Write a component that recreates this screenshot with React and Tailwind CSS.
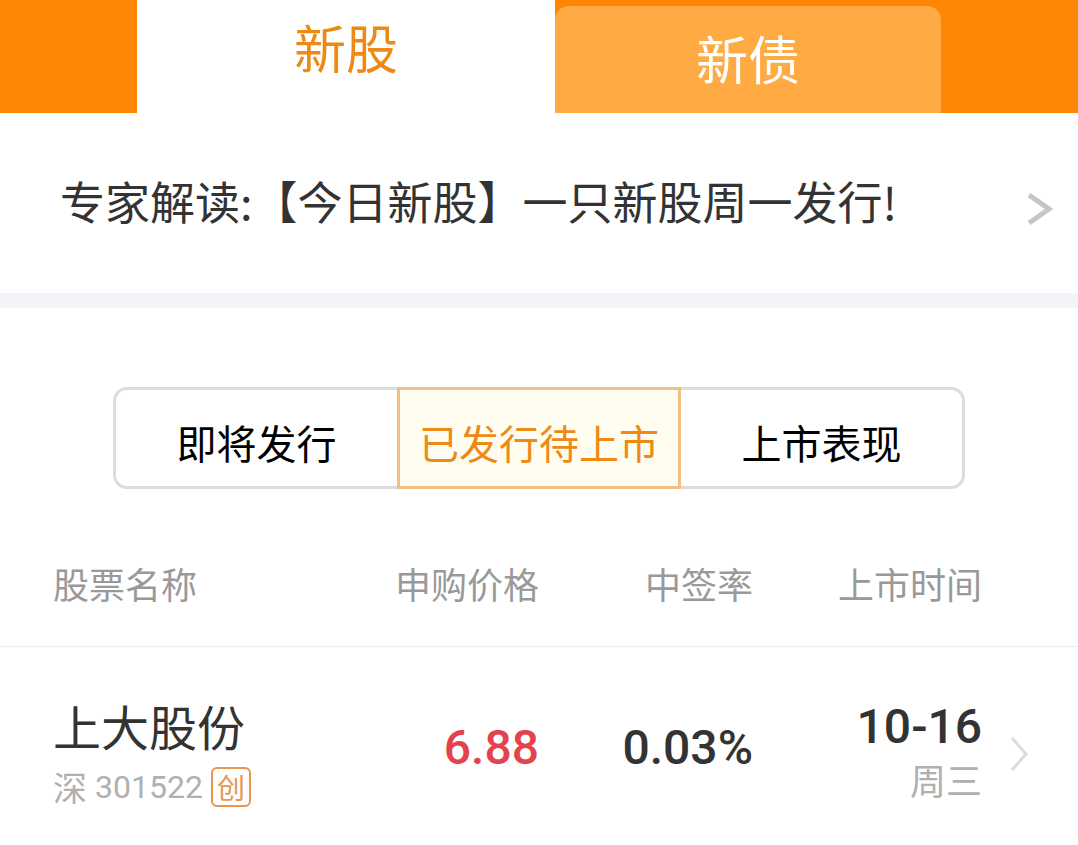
import React, { useState } from "react";

const filters = ["即将发行", "已发行待上市", "上市表现"];

const stocks = [
  {
    name: "上大股份",
    market: "深",
    code: "301522",
    board: "创",
    price: "6.88",
    rate: "0.03%",
    date: "10-16",
    weekday: "周三",
  },
];

function Header() {
  return (
    <nav aria-label="新股新债" className="flex h-[113px] items-end bg-[#ff8604] px-[137px] text-[52px] leading-[60px]">
      <button type="button" aria-current="page" className="h-full flex-[418] bg-white pb-5 text-[#ee8a14]">
        新股
      </button>
      <button type="button" className="h-[107px] flex-[386] rounded-t-[14px] bg-[#ffaa42] pb-1 text-white">
        新债
      </button>
    </nav>
  );
}

function NewsLink() {
  return (
    <a
      href="#news"
      className="flex h-[195px] items-center justify-between border-b-[15px] border-[#f3f4f8] pr-6 pb-1 pl-[60px] text-[45px] leading-[60px] text-[#333333]"
    >
      <span>专家解读:【今日新股】一只新股周一发行!</span>
      <svg aria-hidden="true" viewBox="0 0 28 36" className="mt-4 h-9 w-7 shrink-0" fill="none" stroke="#c6c6c6" strokeWidth="5">
        <path d="M3 4 L23 18 L3 32" />
      </svg>
    </a>
  );
}

function Filters({ value, onChange }) {
  return (
    <div className="mx-[113px] mt-[79px] grid h-[102px] grid-cols-3 text-[40px] leading-[60px] text-black">
      {filters.map((label, i) => (
        <button
          key={label}
          type="button"
          aria-pressed={value === i}
          onClick={() => onChange(i)}
          className={
            "border-y-[3px] first:rounded-l-[14px] first:border-l-[3px] last:rounded-r-[14px] last:border-r-[3px] pt-2 " +
            (value === i
              ? "border-x-[3px] border-[#f0c080] bg-[#fffdef] text-[#ee8a14]"
              : "border-[#dcdcdc] bg-white")
          }
        >
          {label}
        </button>
      ))}
    </div>
  );
}

function StockTable() {
  return (
    <table className="w-full table-fixed text-right">
      <colgroup>
        <col />
        <col className="w-[220px]" />
        <col className="w-[214px]" />
        <col className="w-[229px]" />
        <col className="w-24" />
      </colgroup>
      <thead>
        <tr className="h-[157px] border-b border-[#ececec] align-top text-[36px] leading-[60px] text-[#999999]">
          <th scope="col" className="pt-16 pl-[53px] text-left font-normal">股票名称</th>
          <th scope="col" className="pt-16 font-normal">申购价格</th>
          <th scope="col" className="pt-16 font-normal">中签率</th>
          <th scope="col" className="pt-16 font-normal">上市时间</th>
          <td />
        </tr>
      </thead>
      <tbody>
        {stocks.map((s) => (
          <tr key={s.code} className="align-top text-[48px] leading-[60px] text-[#333333]">
            <td className="pt-12 pl-[53px] text-left">
              <div>{s.name}</div>
              <div className="flex items-center gap-2 pt-1 text-[34px] leading-[56px] text-[#b0b0b0]">
                <span>{s.market}</span>
                <span className="font-[Roboto,sans-serif] text-[32px]">{s.code}</span>
                <span className="flex h-10 w-10 items-center justify-center rounded-md border-2 border-[#e89550] text-[28px] leading-9 text-[#e89550]">
                  {s.board}
                </span>
              </div>
            </td>
            <td className="pt-[71px] font-[Roboto,sans-serif] font-medium text-[#e2434c]">{s.price}</td>
            <td className="pt-[71px] font-[Roboto,sans-serif] font-medium">{s.rate}</td>
            <td className="pt-[50px]">
              <div className="font-[Roboto,sans-serif] font-medium">{s.date}</div>
              <div className="text-[36px] leading-[44px] text-[#b0b0b0]">{s.weekday}</div>
            </td>
            <td className="pt-[89px]">
              <a href={"#" + s.code} aria-label={s.name} className="ml-7 block w-5">
                <svg aria-hidden="true" viewBox="0 0 20 36" className="h-9 w-5" fill="none" stroke="#dcdcdc" strokeWidth="3">
                  <path d="M2 2 L16 18 L2 34" />
                </svg>
              </a>
            </td>
          </tr>
        ))}
      </tbody>
    </table>
  );
}

export default function App() {
  const [filter, setFilter] = useState(1);
  return (
    <main className="min-h-screen bg-white font-['Noto_Sans_CJK_SC',sans-serif]">
      <Header />
      <NewsLink />
      <Filters value={filter} onChange={setFilter} />
      <StockTable />
    </main>
  );
}
